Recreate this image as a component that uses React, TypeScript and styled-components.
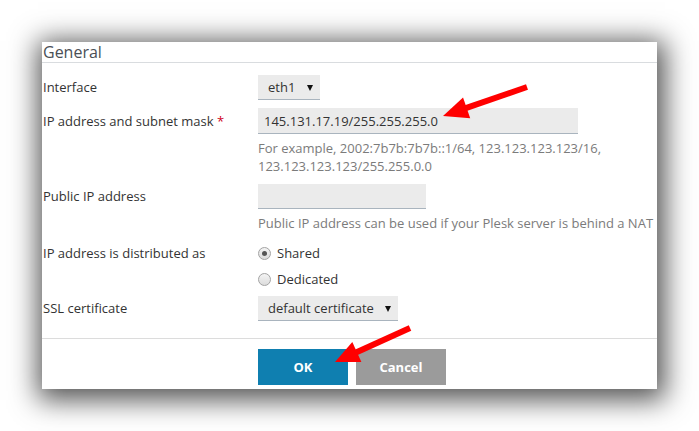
import React from "react";
import styled, { createGlobalStyle } from "styled-components";

const GlobalStyle = createGlobalStyle`
  html, body {
    margin: 0;
    padding: 0;
    background: #ffffff;
  }
  body {
    font-family: "Open Sans", "Noto Sans", Arial, sans-serif;
    -webkit-font-smoothing: antialiased;
  }
`;

const Page = styled.div`
  position: relative;
  width: 699px;
  height: 431px;
  box-sizing: border-box;
  padding: 42px 42px 0 42px;
  overflow: hidden;
`;

const Panel = styled.div`
  width: 615px;
  height: 347px;
  background: #ffffff;
  box-shadow: 2px 5px 26px 6px rgba(0, 0, 0, 0.68);
  display: flex;
  flex-direction: column;
`;

const Title = styled.div`
  font-size: 16px;
  line-height: 20px;
  color: #4a4f55;
  border-bottom: 1px solid #d9dcdf;
  padding-left: 1px;
`;

const Form = styled.div`
  display: flex;
  flex-direction: column;
  flex: 1;
`;

const FieldRow = styled.div<{ $mt: number }>`
  display: grid;
  grid-template-columns: 216px 1fr;
  align-items: start;
  margin-top: ${(p) => p.$mt}px;
`;

const Label = styled.div<{ $h: number }>`
  font-size: 13px;
  line-height: ${(p) => p.$h}px;
  color: #333333;
  padding-left: 1px;
  white-space: nowrap;
`;

const Required = styled.span`
  color: #d0021b;
`;

const Control = styled.div`
  display: flex;
  flex-direction: column;
  align-items: flex-start;
`;

const Select = styled.div<{ $w: number }>`
  box-sizing: border-box;
  width: ${(p) => p.$w}px;
  height: 25px;
  display: flex;
  align-items: center;
  justify-content: space-between;
  padding: 0 7px 0 10px;
  background: #ebebeb;
  border-bottom: 1px solid #a9b4be;
  font-size: 13px;
  color: #333333;
`;

const Caret = styled.span`
  width: 0;
  height: 0;
  border-left: 3px solid transparent;
  border-right: 3px solid transparent;
  border-top: 6px solid #111111;
  margin-top: 1px;
`;

const TextInput = styled.div<{ $w: number; $h: number }>`
  box-sizing: border-box;
  width: ${(p) => p.$w}px;
  height: ${(p) => p.$h}px;
  display: flex;
  align-items: center;
  padding-left: 6px;
  background: #ebebeb;
  border-bottom: 1px solid #a9b4be;
  font-size: 13px;
  color: #333333;
`;

const Help = styled.div`
  margin-top: 5px;
  font-size: 13px;
  line-height: 18px;
  color: #7b7b7b;
  white-space: nowrap;
`;

const RadioOption = styled.div`
  height: 26px;
  display: flex;
  align-items: center;
  gap: 6px;
  font-size: 13px;
  color: #333333;
`;

const RadioCircle = styled.span<{ $checked?: boolean }>`
  box-sizing: border-box;
  width: 13px;
  height: 13px;
  border-radius: 50%;
  border: 1px solid #a3a3a3;
  background: linear-gradient(#f4f4f4, #dcdcdc);
  display: flex;
  align-items: center;
  justify-content: center;
  &::after {
    content: "";
    display: ${(p) => (p.$checked ? "block" : "none")};
    width: 5px;
    height: 5px;
    border-radius: 50%;
    background: #555555;
  }
`;

const Footer = styled.div`
  margin-top: auto;
  border-top: 1px solid #dcdcdc;
  padding: 10px 0 4px 216px;
  display: flex;
  gap: 8px;
`;

const Button = styled.div<{ $primary?: boolean }>`
  width: 90px;
  height: 36px;
  display: flex;
  align-items: center;
  justify-content: center;
  background: ${(p) => (p.$primary ? "#0f7fb0" : "#9b9b9b")};
  color: #ffffff;
  font-weight: 700;
  font-size: 13px;
`;

const Overlay = styled.svg`
  position: absolute;
  left: 0;
  top: 0;
  pointer-events: none;
`;

function Arrow({
  tail,
  tip,
  head = 25,
  half = 11,
  width = 6,
}: {
  tail: [number, number];
  tip: [number, number];
  head?: number;
  half?: number;
  width?: number;
}) {
  const dx = tip[0] - tail[0];
  const dy = tip[1] - tail[1];
  const len = Math.hypot(dx, dy);
  const ux = dx / len;
  const uy = dy / len;
  const bx = tip[0] - ux * head;
  const by = tip[1] - uy * head;
  const nx = -uy * half;
  const ny = ux * half;
  return (
    <g fill="#ff0000" stroke="none">
      <line
        x1={tail[0]}
        y1={tail[1]}
        x2={bx + ux * 4}
        y2={by + uy * 4}
        stroke="#ff0000"
        strokeWidth={width}
      />
      <polygon
        points={`${tip[0]},${tip[1]} ${bx + nx},${by + ny} ${bx - nx},${by - ny}`}
      />
    </g>
  );
}

export default function App() {
  return (
    <>
      <GlobalStyle />
      <Page>
        <Panel>
          <Title>General</Title>
          <Form>
            <FieldRow $mt={12}>
              <Label $h={25}>Interface</Label>
              <Control>
                <Select $w={62}>
                  <span>eth1</span>
                  <Caret />
                </Select>
              </Control>
            </FieldRow>
            <FieldRow $mt={8}>
              <Label $h={26}>
                IP address and subnet mask <Required>*</Required>
              </Label>
              <Control>
                <TextInput $w={320} $h={26}>
                  145.131.17.19/255.255.255.0
                </TextInput>
                <Help>
                  For example, 2002:7b7b:7b7b::1/64, 123.123.123.123/16,
                  <br />
                  123.123.123.123/255.255.0.0
                </Help>
              </Control>
            </FieldRow>
            <FieldRow $mt={9}>
              <Label $h={25}>Public IP address</Label>
              <Control>
                <TextInput $w={168} $h={25} />
                <Help>
                  Public IP address can be used if your Plesk server is behind a NAT
                </Help>
              </Control>
            </FieldRow>
            <FieldRow $mt={8}>
              <Label $h={26}>IP address is distributed as</Label>
              <Control>
                <RadioOption>
                  <RadioCircle $checked />
                  Shared
                </RadioOption>
                <RadioOption>
                  <RadioCircle />
                  Dedicated
                </RadioOption>
              </Control>
            </FieldRow>
            <FieldRow $mt={4}>
              <Label $h={25}>SSL certificate</Label>
              <Control>
                <Select $w={140}>
                  <span>default certificate</span>
                  <Caret />
                </Select>
              </Control>
            </FieldRow>
            <Footer>
              <Button $primary>OK</Button>
              <Button>Cancel</Button>
            </Footer>
          </Form>
        </Panel>
        <Overlay width={699} height={431} viewBox="0 0 699 431">
          <Arrow tail={[527, 87]} tip={[443, 116]} />
          <Arrow tail={[410, 328]} tip={[335, 362]} head={24} />
        </Overlay>
      </Page>
    </>
  );
}
